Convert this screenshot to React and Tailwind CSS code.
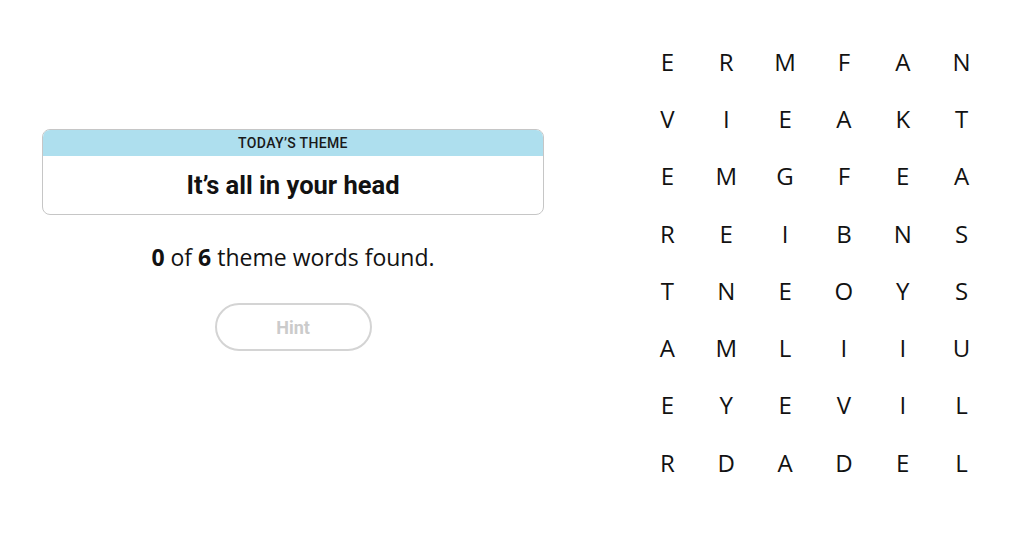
const GRID = [
  "ERMFAN",
  "VIEAKT",
  "EMGFEA",
  "REIBNS",
  "TNEOYS",
  "AMLIIU",
  "EYEVIL",
  "RDADEL",
];

export default function App() {
  return (
    <div className="flex h-[545px] w-[1024px] bg-white text-[#121212] font-['Open_Sans',sans-serif]">
      {/* Theme + hint */}
      <div className="w-[638px] shrink-0 pl-[42px] pt-[129px]">
        <div className="w-[502px]">
          <div className="overflow-hidden rounded-lg border border-[#c6c6c6]">
            <div className="flex h-[26px] items-center justify-center bg-[#aedfee] font-['Roboto',sans-serif] text-[14px] font-medium tracking-wide text-[#1a1a1a]">
              TODAY’S THEME
            </div>
            <div className="flex h-[58px] items-center justify-center font-['Roboto',sans-serif] text-[25.5px] font-bold">
              It’s all in your head
            </div>
          </div>
          <p className="mt-[27px] text-center text-[23px] leading-[30px]">
            <b>0</b> of <b>6</b> theme words found.
          </p>
          <div className="mt-[31px] flex justify-center">
            <button className="flex h-[48px] w-[157px] items-center justify-center rounded-full border-2 border-[#d4d4d4] font-['Roboto',sans-serif] text-[18px] font-bold text-[#cbcbcb]">
              Hint
            </button>
          </div>
        </div>
      </div>

      {/* Letter board */}
      <div className="pt-[33px]">
        <div className="grid w-[353px] grid-cols-6">
          {GRID.flatMap((row, r) =>
            row.split("").map((ch, c) => (
              <div
                key={`${r}-${c}`}
                className="flex h-[57.3px] items-center justify-center text-[24px]"
              >
                {ch}
              </div>
            ))
          )}
        </div>
      </div>
    </div>
  );
}
